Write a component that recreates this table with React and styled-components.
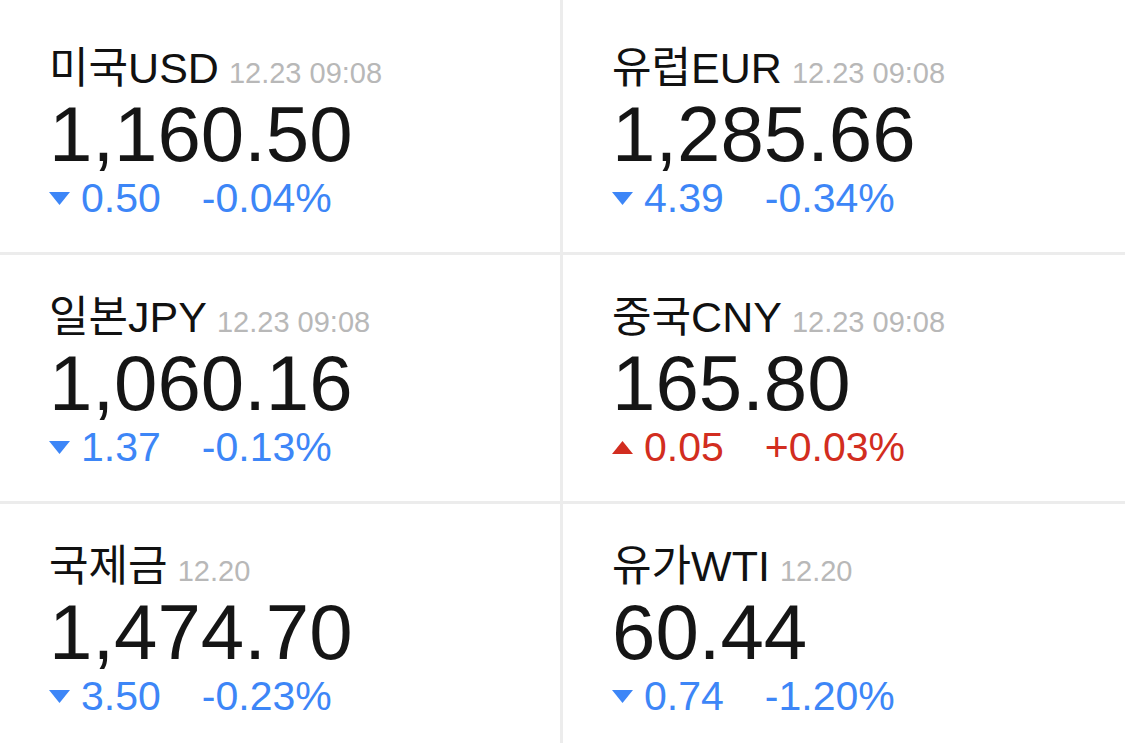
import styled, { createGlobalStyle } from "styled-components"

const GlobalStyle = createGlobalStyle`
  html, body {
    margin: 0;
    padding: 0;
    background: #fff;
  }
  body {
    font-family: "Helvetica Neue", "Liberation Sans", "Noto Sans CJK KR", sans-serif;
  }
`

const rates = [
  { name: "미국USD", date: "12.23 09:08", price: "1,160.50", diff: "0.50", rate: "-0.04%", up: false },
  { name: "유럽EUR", date: "12.23 09:08", price: "1,285.66", diff: "4.39", rate: "-0.34%", up: false },
  { name: "일본JPY", date: "12.23 09:08", price: "1,060.16", diff: "1.37", rate: "-0.13%", up: false },
  { name: "중국CNY", date: "12.23 09:08", price: "165.80", diff: "0.05", rate: "+0.03%", up: true },
  { name: "국제금", date: "12.20", price: "1,474.70", diff: "3.50", rate: "-0.23%", up: false },
  { name: "유가WTI", date: "12.20", price: "60.44", diff: "0.74", rate: "-1.20%", up: false },
]

const Arrow = ({ up }) => (
  <svg width="21" height="13" viewBox="0 0 21 13">
    {up
      ? <polygon points="0,13 21,13 10.5,0" fill="currentColor" />
      : <polygon points="0,0 21,0 10.5,13" fill="currentColor" />}
  </svg>
)

const RateCard = ({ name, date, price, diff, rate, up }) => (
  <Cell>
    <TitleRow>
      <Name>{name}</Name>
      <Stamp>{date}</Stamp>
    </TitleRow>
    <Price>{price}</Price>
    <Change $up={up}>
      <Arrow up={up} />
      <Diff>{diff}</Diff>
      <Rate>{rate}</Rate>
    </Change>
  </Cell>
)

const App = () => {
  return (
    <>
      <GlobalStyle />
      <Board>
        {rates.map((r) => <RateCard key={r.name} {...r} />)}
      </Board>
    </>
  )
}

export default App

const Board = styled.div`
display: grid;
grid-template-columns: 560px 1fr;
grid-auto-rows: 246px;
grid-template-rows: 252px;
gap: 3px;
background: #ececec;
height: 743px;
overflow: hidden;
`

const Cell = styled.div`
background: #fff;
padding: 37px 0 0 49px;
display: flex;
flex-direction: column;

&:nth-child(-n+2) {
  padding-top: 43px;
}
`

const TitleRow = styled.div`
display: flex;
align-items: baseline;
column-gap: 10px;
height: 50px;
`

const Name = styled.span`
font-size: 43px;
line-height: 50px;
color: #111;
`

const Stamp = styled.span`
font-size: 29px;
line-height: 50px;
color: #b8b8b8;
`

const Price = styled.div`
font-size: 78px;
line-height: 80px;
color: #151515;
margin-top: 1px;
`

const Change = styled.div`
display: flex;
align-items: center;
margin-top: 2px;
height: 44px;
font-size: 41px;
color: ${(p) => (p.$up ? "#d22d20" : "#3d86f7")};
`

const Diff = styled.span`
margin-left: 11px;
`

const Rate = styled.span`
margin-left: 41px;
`
